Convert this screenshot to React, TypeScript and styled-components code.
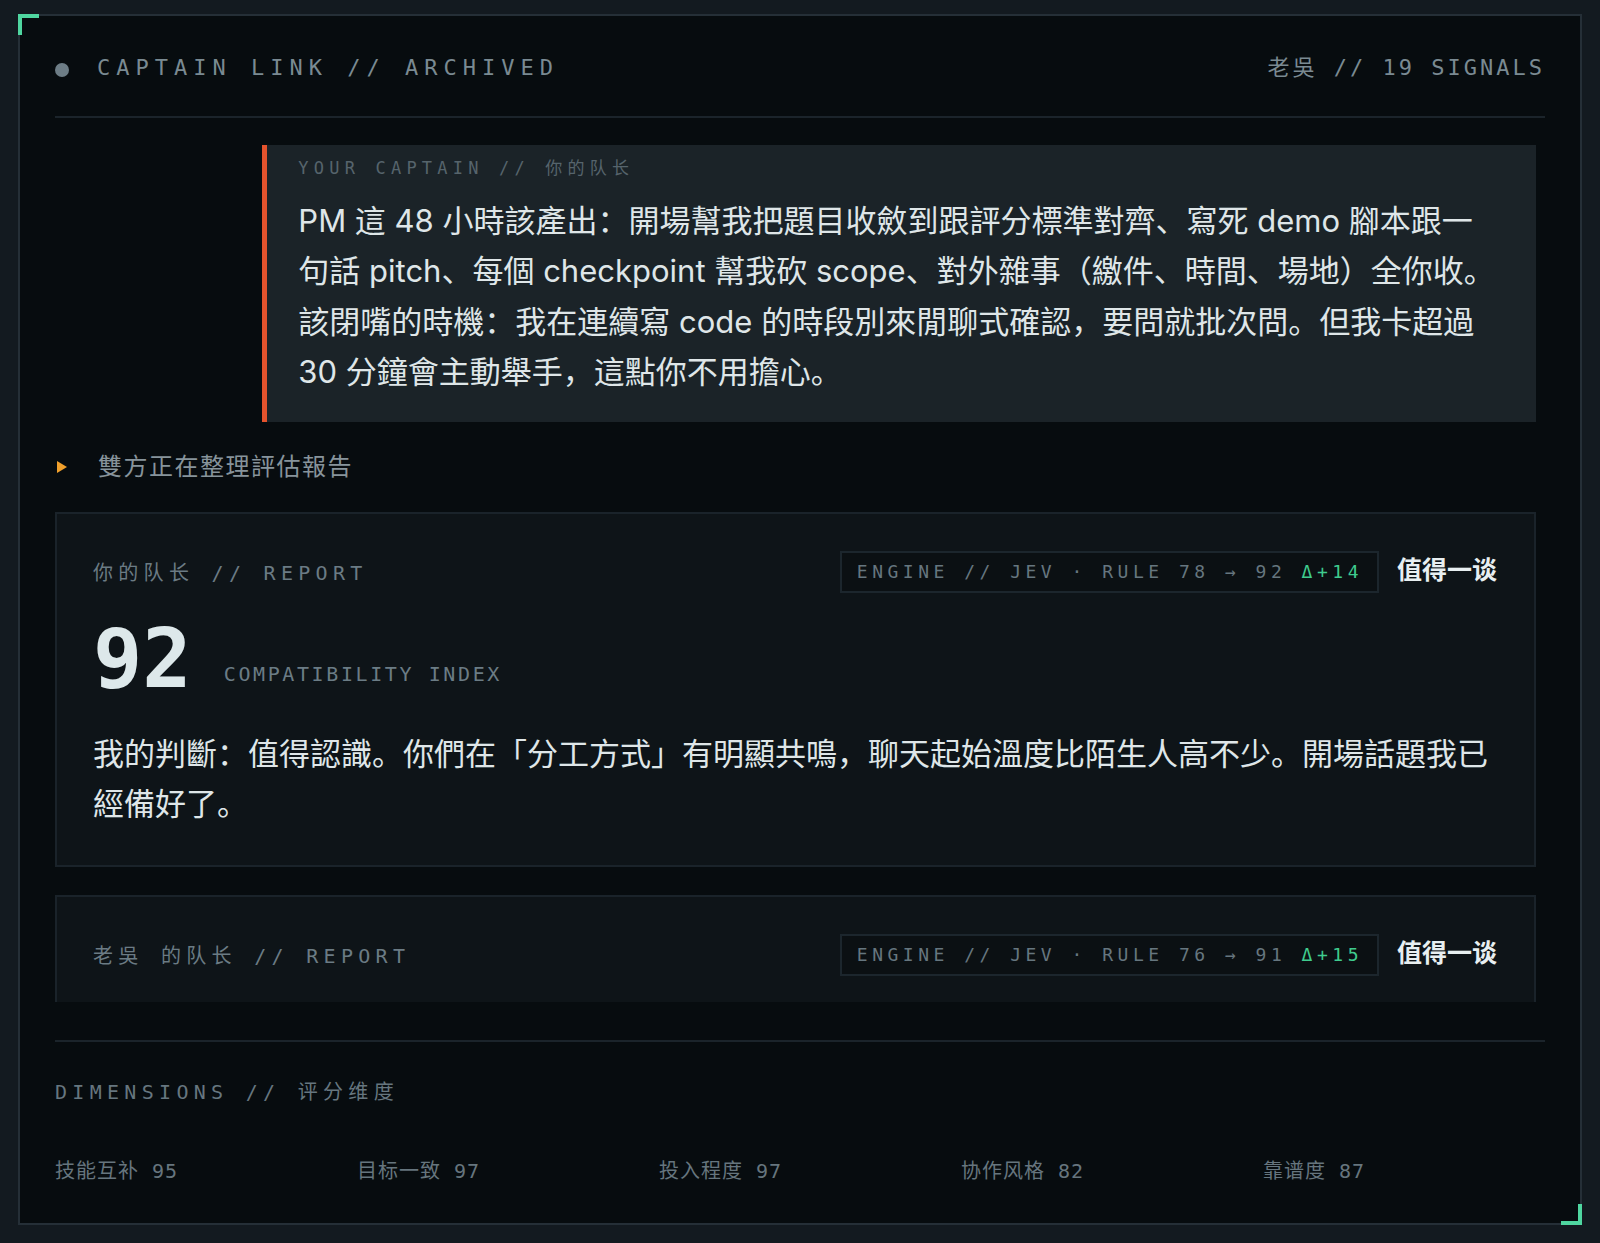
import styled, { createGlobalStyle } from "styled-components";

const MONO_SC = `"DejaVu Sans Mono", "Noto Sans CJK SC", monospace`;
const BODY = `"Inter", "Noto Sans CJK SC", sans-serif`;

const GlobalStyle = createGlobalStyle`
  html, body {
    margin: 0;
    background: #131a20;
  }
  body {
    font-family: ${BODY};
    -webkit-font-smoothing: antialiased;
  }
  * {
    box-sizing: border-box;
  }
`;

const Page = styled.div`
  padding: 14px 18px 21px;
`;

const Panel = styled.section`
  position: relative;
  border: 2px solid #252f37;
  background: #070c0f;
  padding: 0 35px 38px;
`;

const Corner = styled.span<{ $at: "tl" | "br" }>`
  position: absolute;
  width: 21px;
  height: 21px;
  border: 0 solid #4fd6a0;
  ${(p) =>
    p.$at === "tl"
      ? `top: -2px; left: -2px; border-top-width: 4px; border-left-width: 4px;`
      : `bottom: -2px; right: -2px; border-bottom-width: 4px; border-right-width: 4px;`}
`;

const Header = styled.header`
  display: flex;
  align-items: center;
  justify-content: space-between;
  padding: 37px 0 33px;
  border-bottom: 2px solid #1b242b;
`;

const Title = styled.div`
  display: flex;
  align-items: center;
  gap: 28px;
  font: 22px/30px ${MONO_SC};
  letter-spacing: 6px;
  color: #7a8a92;
`;

const Dot = styled.span`
  width: 14px;
  height: 14px;
  margin-top: 3px;
  border-radius: 50%;
  background: #6d7d86;
`;

const Signals = styled.div`
  font: 22px/30px ${MONO_SC};
  letter-spacing: 3px;
  color: #7a8a92;
`;

const Feed = styled.div`
  display: flex;
  flex-direction: column;
  padding-right: 9px;
`;

const Note = styled.div`
  margin: 27px 0 0 auto;
  width: 86%;
  background: #1b2328;
  border-left: 5px solid #e5532d;
  padding: 11px 37px 24px 31px;
`;

const NoteLabel = styled.div`
  font: 17px/24px ${MONO_SC};
  letter-spacing: 5.2px;
  color: #56646c;
  margin-bottom: 16px;
`;

const NoteText = styled.p`
  margin: 0;
  font: 31px/50.4px ${BODY};
  color: #dfe6e8;
`;

const Status = styled.div`
  display: flex;
  align-items: center;
  margin-top: 30px;
  font: 24px/30px "DejaVu Sans Mono", "Noto Sans CJK TC", monospace;
  letter-spacing: 1.5px;
  color: #87949b;
`;

const Arrow = styled.span`
  width: 0;
  height: 0;
  margin: 0 31px 0 2px;
  border-left: 10px solid #f0a02c;
  border-top: 6px solid transparent;
  border-bottom: 6px solid transparent;
`;

const Card = styled.article<{ $clip?: boolean }>`
  margin-top: 30px;
  background: #0e1418;
  border: 2px solid #1a232a;
  padding: 37px 37px 36px 36px;
  ${(p) => p.$clip && `margin-top: 28px; height: 107px; overflow: hidden; border-bottom: 0;`}
`;

const CardHead = styled.div`
  display: flex;
  align-items: center;
`;

const ReportLabel = styled.div`
  flex: 1;
  padding-top: 3px;
  font: 20px/28px ${MONO_SC};
  letter-spacing: 5.3px;
  color: #6b7b84;
`;

const EngineTag = styled.div`
  display: flex;
  align-items: center;
  height: 42px;
  padding: 0 14px 0 15px;
  border: 2px solid #1c262d;
  background: #0b1013;
  font: 18px ${MONO_SC};
  letter-spacing: 4.5px;
  color: #66767f;
  white-space: pre;
`;

const Delta = styled.span`
  color: #3fcb8e;
`;

const Verdict = styled.div`
  margin: 0 0 8px 18px;
  font: 700 25px/30px "Noto Sans CJK SC", sans-serif;
  color: #e8eff1;
`;

const ScoreRow = styled.div`
  display: flex;
  align-items: flex-end;
  gap: 32px;
  margin-top: 25px;
`;

const Score = styled.div`
  font: 700 82px/82px ${MONO_SC};
  color: #dde8ea;
`;

const ScoreCaption = styled.div`
  margin-bottom: 14px;
  font: 20px/24px ${MONO_SC};
  letter-spacing: 2.6px;
  color: #6b7c85;
`;

const Judgement = styled.p`
  margin: 29px 0 0;
  font: 31px/50px ${BODY};
  color: #dfe6e8;
`;

const Dimensions = styled.div`
  margin-top: 38px;
  border-top: 2px solid #1b242b;
`;

const DimTitle = styled.div`
  margin-top: 36px;
  font: 20px/28px ${MONO_SC};
  letter-spacing: 5.3px;
  color: #66767f;
`;

const DimGrid = styled.div`
  display: grid;
  grid-template-columns: repeat(5, 1fr);
  column-gap: 20px;
  margin-top: 51px;
`;

const DimItem = styled.div`
  font: 20px/28px ${MONO_SC};
  letter-spacing: 1px;
  color: #66757e;
  white-space: nowrap;
`;

type Report = {
  owner: string;
  from: number;
  to: number;
  judgement?: string;
};

const reports: Report[] = [
  {
    owner: "你的队长",
    from: 78,
    to: 92,
    judgement:
      "我的判斷：值得認識。你們在「分工方式」有明顯共鳴，聊天起始溫度比陌生人高不少。開場話題我已經備好了。",
  },
  // still loading, only the header has slid in so far
  { owner: "老吳 的队长", from: 76, to: 91 },
];

const dims: [string, number][] = [
  ["技能互补", 95],
  ["目标一致", 97],
  ["投入程度", 97],
  ["协作风格", 82],
  ["靠谱度", 87],
];

function ReportCard({ report }: { report: Report }) {
  const open = !!report.judgement;
  return (
    <Card $clip={!open}>
      <CardHead>
        <ReportLabel>{report.owner} // REPORT</ReportLabel>
        <EngineTag>
          {`ENGINE // JEV · RULE ${report.from} → ${report.to} `}
          <Delta>Δ+{report.to - report.from}</Delta>
        </EngineTag>
        <Verdict>值得一谈</Verdict>
      </CardHead>
      {open && (
        <>
          <ScoreRow>
            <Score>{report.to}</Score>
            <ScoreCaption>COMPATIBILITY INDEX</ScoreCaption>
          </ScoreRow>
          <Judgement>{report.judgement}</Judgement>
        </>
      )}
    </Card>
  );
}

export default function App() {
  return (
    <>
      <GlobalStyle />
      <Page>
        <Panel>
          <Corner $at="tl" />
          <Corner $at="br" />
          <Header>
            <Title>
              <Dot />
              CAPTAIN LINK // ARCHIVED
            </Title>
            <Signals>老吳 // 19 SIGNALS</Signals>
          </Header>

          <Feed>
            <Note>
              <NoteLabel>YOUR CAPTAIN // 你的队长</NoteLabel>
              <NoteText>
                PM 這 48 小時該產出：開場幫我把題目收斂到跟評分標準對齊、寫死 demo 腳本跟一句話 pitch、每個 checkpoint 幫我砍 scope、對外雜事（繳件、時間、場地）全你收。該閉嘴的時機：我在連續寫 code 的時段別來閒聊式確認，要問就批次問。但我卡超過 30 分鐘會主動舉手，這點你不用擔心。
              </NoteText>
            </Note>

            <Status>
              <Arrow />
              雙方正在整理評估報告
            </Status>

            {reports.map((r) => (
              <ReportCard key={r.owner} report={r} />
            ))}
          </Feed>

          <Dimensions>
            <DimTitle>DIMENSIONS // 评分维度</DimTitle>
            <DimGrid>
              {dims.map(([name, val]) => (
                <DimItem key={name}>
                  {name} {val}
                </DimItem>
              ))}
            </DimGrid>
          </Dimensions>
        </Panel>
      </Page>
    </>
  );
}
